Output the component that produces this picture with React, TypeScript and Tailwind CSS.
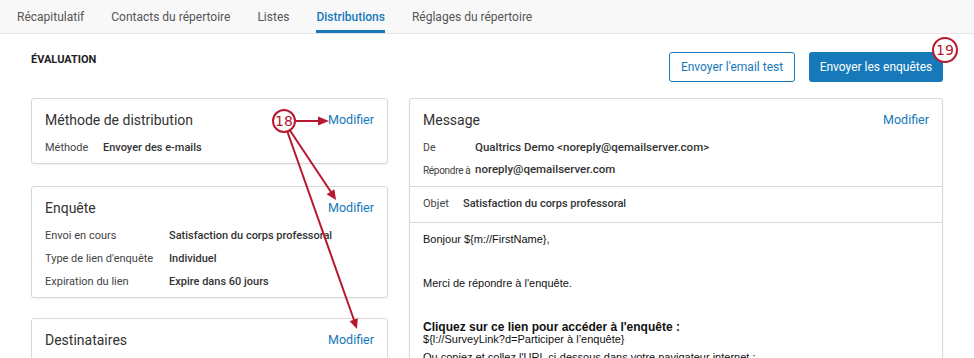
import React from "react";

const BLUE = "text-[#1779ba]";

function Row({ label, value, labelW }: { label: string; value: string; labelW: string }) {
  return (
    <div className="flex h-[23px] items-center text-[11px]">
      <div className={`${labelW} shrink-0 whitespace-nowrap text-[#444]`}>{label}</div>
      <div className="whitespace-nowrap font-medium text-[#333]">{value}</div>
    </div>
  );
}

function Card({
  title,
  children,
  className = "",
}: {
  title: string;
  children?: React.ReactNode;
  className?: string;
}) {
  return (
    <div className={`rounded-[3px] border border-[#d9d9d9] bg-white px-[13px] pt-[11px] pb-[3px] shadow-[0_1px_2px_rgba(0,0,0,0.06)] ${className}`}>
      <div className="flex h-[20px] items-center justify-between">
        <div className="text-[14px] text-[#333]">{title}</div>
        <div className={`text-[12.5px] ${BLUE}`}>Modifier</div>
      </div>
      {children ? <div className="mt-[7px]">{children}</div> : null}
    </div>
  );
}

export default function App() {
  const tabs = ["Récapitulatif", "Contacts du répertoire", "Listes", "Distributions", "Réglages du répertoire"];
  return (
    <div className="relative h-[358px] w-[974px] overflow-hidden bg-white font-['Roboto',sans-serif] text-[#333]">
      {/* Tabs */}
      <div className="flex h-[34px] border-b border-[#e6e6e6] bg-[#f8f8f8] pl-[17px]">
        {tabs.map((t) => (
          <div
            key={t}
            className={`mr-[27px] flex h-full items-center text-[12px] ${
              t === "Distributions"
                ? "border-b-[3px] border-[#1779ba] pt-[3px] font-medium text-[#1779ba]"
                : "text-[#555]"
            }`}
          >
            {t}
          </div>
        ))}
      </div>

      {/* Header */}
      <div className="flex items-start justify-between px-[31px] pt-[18px]">
        <div className="mt-[1px] text-[11px] font-bold leading-[14px] text-[#222]">ÉVALUATION</div>
        <div className="flex gap-[14px]">
          <button className="h-[30px] w-[126px] rounded-[3px] border border-[#1779ba] bg-white text-[12px] text-[#1779ba]">
            Envoyer l'email test
          </button>
          <button className="h-[30px] w-[134px] rounded-[3px] bg-[#1779ba] text-[12px] text-white">
            Envoyer les enquêtes
          </button>
        </div>
      </div>

      {/* Body */}
      <div className="mt-[16px] flex gap-[21px] px-[31px]">
        <div className="flex w-[357px] shrink-0 flex-col">
          <Card title="Méthode de distribution">
            <Row label="Méthode" value="Envoyer des e-mails" labelW="w-[58px]" />
          </Card>
          <Card title="Enquête" className="mt-[22px]">
            <Row label="Envoi en cours" value="Satisfaction du corps professoral" labelW="w-[124px]" />
            <Row label="Type de lien d'enquête" value="Individuel" labelW="w-[124px]" />
            <Row label="Expiration du lien" value="Expire dans 60 jours" labelW="w-[124px]" />
          </Card>
          <Card title="Destinataires" className="mt-[20px] h-[80px]" />
        </div>

        <div className="flex-1 rounded-[3px] border border-[#d9d9d9] bg-white shadow-[0_1px_2px_rgba(0,0,0,0.06)]">
          <div className="border-b border-[#d9d9d9] px-[13px] pt-[11px] pb-[5px]">
            <div className="flex h-[20px] items-center justify-between">
              <div className="text-[14px] text-[#333]">Message</div>
              <div className={`text-[12.5px] ${BLUE}`}>Modifier</div>
            </div>
            <div className="mt-[7px]">
              <div className="flex h-[22px] items-center">
                <div className="w-[52px] shrink-0 whitespace-nowrap text-[10.5px] text-[#444]">De</div>
                <div className="whitespace-nowrap text-[11.5px] font-medium">Qualtrics Demo &lt;noreply@qemailserver.com&gt;</div>
              </div>
              <div className="flex h-[22px] items-center">
                <div className="w-[52px] shrink-0 whitespace-nowrap text-[10px] tracking-[-0.3px] text-[#444]">Répondre à</div>
                <div className="whitespace-nowrap text-[11.5px] font-medium">noreply@qemailserver.com</div>
              </div>
            </div>
          </div>
          <div className="flex h-[36px] items-center border-b border-[#d9d9d9] px-[13px] text-[11px]">
            <div className="w-[40px] text-[#444]">Objet</div>
            <div className="font-medium">Satisfaction du corps professoral</div>
          </div>
          <div className="px-[13px] pt-[10px] font-['Liberation_Sans',Arial,sans-serif] text-[11px] leading-[13px] text-[#111]">
            <div>Bonjour ${"{"}m://FirstName{"}"},</div>
            <div className="mt-[31px]">Merci de répondre à l'enquête.</div>
            <div className="mt-[31px] text-[12px] font-bold">Cliquez sur ce lien pour accéder à l'enquête :</div>
            <div className="mt-[-1px]">${"{"}l://SurveyLink?d=Participer à l’enquête{"}"}</div>
            <div className="mt-[5px]">Ou copiez et collez l'URL ci-dessous dans votre navigateur internet :</div>
          </div>
        </div>
      </div>

      {/* Annotations */}
      <svg
        className="pointer-events-none absolute left-0 top-0"
        width="974"
        height="358"
        viewBox="0 0 974 358"
      >
        <g stroke="#b8182e" strokeWidth="2" fill="none">
          <line x1="296" y1="121" x2="320" y2="121" />
          <line x1="290" y1="130.5" x2="331" y2="192" />
          <line x1="287.5" y1="132" x2="354" y2="320" />
        </g>
        <g fill="#b8182e">
          <polygon points="329,121 318,116.5 318,125.5" />
          <polygon points="336,200 326.6,194.2 334.4,189.2" />
          <polygon points="357,329 349.6,321.2 357.8,318.2" />
        </g>
        <circle cx="284" cy="121" r="11" fill="white" stroke="#b8182e" strokeWidth="2" />
        <text x="284" y="126" textAnchor="middle" fontSize="14" fill="#b8182e" fontFamily="DejaVu Sans, sans-serif">
          18
        </text>
        <circle cx="945" cy="50" r="12" fill="white" stroke="#b8182e" strokeWidth="2" />
        <text x="945" y="55" textAnchor="middle" fontSize="14" fill="#b8182e" fontFamily="DejaVu Sans, sans-serif">
          19
        </text>
      </svg>
    </div>
  );
}
